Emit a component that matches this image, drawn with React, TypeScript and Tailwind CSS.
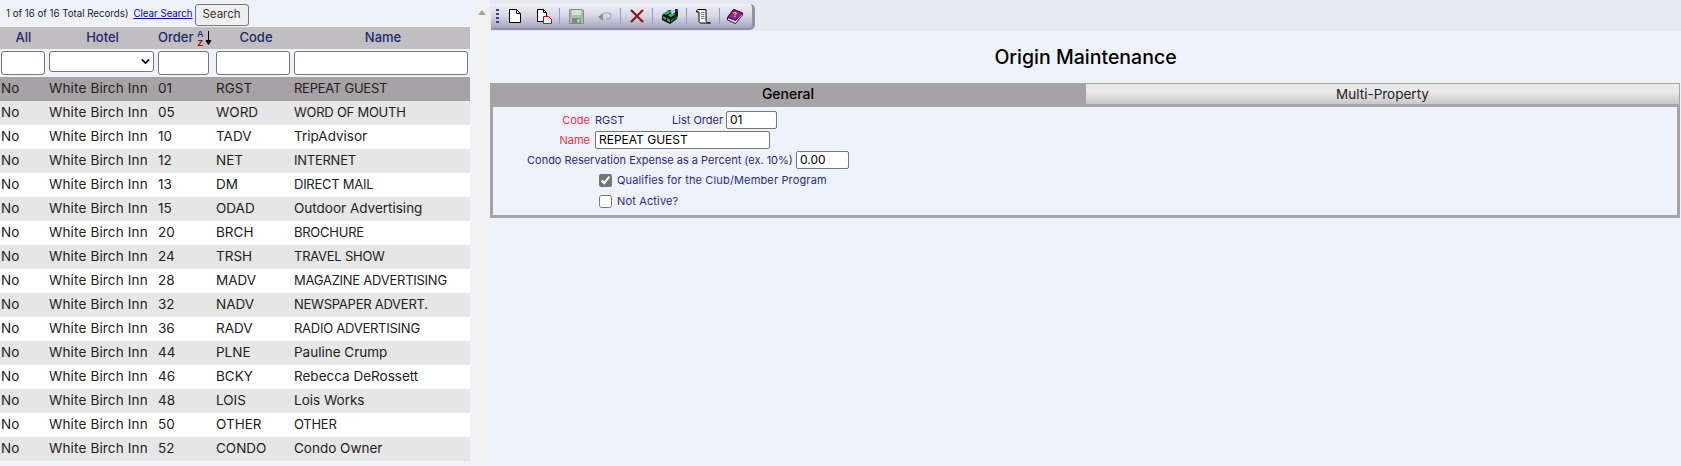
import { ChevronDown } from "lucide-react";

const rows = [
  ["01", "RGST", "REPEAT GUEST"],
  ["05", "WORD", "WORD OF MOUTH"],
  ["10", "TADV", "TripAdvisor"],
  ["12", "NET", "INTERNET"],
  ["13", "DM", "DIRECT MAIL"],
  ["15", "ODAD", "Outdoor Advertising"],
  ["20", "BRCH", "BROCHURE"],
  ["24", "TRSH", "TRAVEL SHOW"],
  ["28", "MADV", "MAGAZINE ADVERTISING"],
  ["32", "NADV", "NEWSPAPER ADVERT."],
  ["36", "RADV", "RADIO ADVERTISING"],
  ["44", "PLNE", "Pauline Crump"],
  ["46", "BCKY", "Rebecca DeRossett"],
  ["48", "LOIS", "Lois Works"],
  ["50", "OTHER", "OTHER"],
  ["52", "CONDO", "Condo Owner"],
];

function Sep() {
  return <div className="ml-[8px] h-[16px] w-px shrink-0 bg-[#7f9fd6]" />;
}

function Toolbar() {
  return (
    <div className="ml-px flex h-[26px] w-[264px] items-center rounded-r-[5px] border-r-[3px] border-b-2 border-[#9090ac] bg-gradient-to-b from-[#f0f0f8] via-[#d6d6e4] to-[#a4a4c0] pl-[5px]">
      {/* grip */}
      <svg width="3" height="15" className="shrink-0"><path d="M0 0h3v2H0zM0 4h3v2H0zM0 8h3v2H0zM0 12h3v2H0z" fill="#2f4a80" /></svg>
      {/* new */}
      <svg width="12" height="14" viewBox="0 0 12 14" className="ml-[10px] shrink-0" fill="#fff" stroke="#000"><path d="M.5.500h7l4 4v9H.5z" /><path d="M7.500.500v4h4" fill="none" /></svg>
      {/* copy */}
      <svg width="15" height="15" viewBox="0 0 15 15" className="ml-[16px] shrink-0" fill="#fff" stroke="#000"><path d="M.5.500h6l3 3v9H.5z" /><path d="M6.500.500v3h3" fill="none" /><path d="M6.500 7.500h5l3 3v4h-8z" stroke="#e00000" /></svg>
      <div className="ml-[-1px]"><Sep /></div>
      {/* save, greyed */}
      <svg width="15" height="15" viewBox="0 0 15 15" className="ml-[9px] shrink-0">
        <path d="M.5.500h13l1 1v13H.5z" fill="#a5c4ab" stroke="#7f9085" />
        <path d="M3 1h9v5H3z" fill="#d5e2d8" />
        <path d="M3 9h9v5.500H3z" fill="#7c8d80" />
        <path d="M8.500 10h2v3.500h-2z" fill="#c8d6cb" />
      </svg>
      {/* undo, greyed */}
      <svg width="14" height="11" viewBox="0 0 14 11" className="ml-[14px] shrink-0" fill="none">
        <path d="M0 6l5-4v8z" fill="#8d8d99" />
        <path d="M4 3.500c3-2.500 9-2.500 9 1.500 0 2.500-2.500 3.500-5 3" stroke="#a5a5b2" strokeWidth="1.200" />
      </svg>
      <Sep />
      {/* delete */}
      <svg width="14" height="14" viewBox="0 0 14 14" className="ml-[9px] shrink-0" fill="none" stroke="#8a1414" strokeWidth="2.200"><path d="M1 1l12 12M13 1L1 13" /></svg>
      <Sep />
      {/* cube */}
      <svg width="16" height="15" viewBox="0 0 16 15" className="ml-[9px] shrink-0">
        <path d="M0 6l7-5 4 1 5-2v6l-1 4-7 5-8-4z" fill="#05120c" />
        <path d="M1 7l3 1.500v2.500l-3-1.500zM5 9l3 1.500v3L5 12zM1 4.500l5-3 3 1.500-5 3z" fill="#12b866" />
        <path d="M9 10.500l2.500-1.500v2.500L9 13zM12.500 8.500l2-1.500v2.500l-2 1.500z" fill="#0d8a4c" />
        <path d="M6 6.500l4-2.500 3 1.500-4 2.500z" fill="#1ad070" />
        <path d="M8 2l5-1v3l-3 1z" fill="#c6cbd0" />
        <path d="M13 0h3v3h-3z" fill="#1a2aa8" />
      </svg>
      <Sep />
      {/* scroll */}
      <svg width="15" height="15" viewBox="0 0 15 15" className="ml-[9px] shrink-0" fill="#fff" stroke="#000">
        <path d="M2.500.500h7.500v11c0 1.500 1 2.500 4.500 2.500H5c-1.500 0-2-1-2-2.500V3H.5C.5 1.500 1 .500 2.500.500z" />
        <path d="M5 3.500h3.500M5 5.500h3.500M5 7.500h3.500M5 9.500h3.500" stroke="#7a7a7a" />
      </svg>
      <Sep />
      {/* help book */}
      <svg width="16" height="15" viewBox="0 0 16 15" className="ml-[7px] shrink-0">
        <path d="M0.500 9l6-8.500 9 3.500v2l-7 8.500-8-3.500z" fill="#efe6ef" stroke="#31083a" />
        <path d="M0.500 8.500l6-8 9 3.500-7 7.500z" fill="#93209a" stroke="#31083a" />
        <text x="5.500" y="8" fontSize="7.500" fontWeight="700" fill="#f2e32c" fontFamily="Liberation Sans, sans-serif">?</text>
      </svg>
    </div>
  );
}

function Cell({ name }: { name: string }) {
  const upper = name === name.toUpperCase();
  return <div className={`whitespace-nowrap ${upper ? "text-[13px] tracking-[-0.25px]" : ""}`}>{name}</div>;
}

export default function App() {
  return (
    <div className="flex h-[466px] w-[1681px] overflow-hidden bg-[#eef2fb] font-['Inter','Noto_Sans',sans-serif]">
      {/* left list */}
      <div className="w-[470px] shrink-0">
        <div className="flex h-[27px] items-center pl-[6px] pt-[2px]">
          <span className="text-[9.700px] text-[#222]">1 of 16 of 16 Total Records)</span>
          <a className="ml-[5px] text-[9.700px] text-[#0000ee] underline">Clear Search</a>
          <button className="ml-[2px] h-[22px] w-[54px] rounded-[3px] border border-[#767676] bg-[#efefef] text-[11.500px] text-[#333]">Search</button>
        </div>
        <div className="flex h-[22px] items-center bg-[#c1bec2] text-[13px] font-medium text-[#1d2a6b]">
          <div className="w-[47px] text-center">All</div>
          <div className="w-[111px] text-center">Hotel</div>
          <div className="flex w-[58px] items-center whitespace-nowrap">
            Order
            <svg width="16" height="16" viewBox="0 0 16 16" className="ml-[4px] shrink-0">
              <text x="0" y="7" fontSize="9" fontWeight="700" fill="#1c2fa0" fontFamily="Liberation Sans, sans-serif">A</text>
              <text x="0.500" y="15.500" fontSize="9" fontWeight="700" fill="#8b1010" fontFamily="Liberation Sans, sans-serif">Z</text>
              <path d="M11.500 1v11M9 10.500l2.500 4 2.500-4z" stroke="#000" fill="#000" />
            </svg>
          </div>
          <div className="ml-[3px] w-[74px] text-center">Code</div>
          <div className="ml-[3px] flex-1 text-center">Name</div>
        </div>
        <div className="flex h-[28px] items-center pl-px">
          <input className="h-[24px] w-[44px] rounded-[3px] border border-[#767676] bg-white" />
          <div className="relative ml-[4px] w-[105px] self-start pt-[2px]">
            <select className="block h-[21px] w-full appearance-none rounded-[3px] border border-[#767676] bg-white" />
            <ChevronDown size={13} strokeWidth={3} className="absolute right-[2px] top-[6px] text-black" />
          </div>
          <input className="ml-[4px] h-[24px] w-[51px] rounded-[3px] border border-[#767676] bg-white" />
          <input className="ml-[7px] h-[24px] w-[74px] rounded-[3px] border border-[#767676] bg-white" />
          <input className="ml-[4px] h-[24px] w-[174px] rounded-[3px] border border-[#767676] bg-white" />
        </div>
        <div className="text-[13.500px] text-[#222]">
          {rows.map((r, i) => (
            <div
              key={r[0]}
              className={`flex h-[24px] items-center pb-px ${i === 0 ? "bg-[#a7a2a5]" : i % 2 ? "bg-[#e6e6e6]" : "bg-white"}`}
            >
              <div className="w-[49px] pl-[1px]">No</div>
              <div className="w-[109px] whitespace-nowrap tracking-[0.15px]">White Birch Inn</div>
              <div className="w-[58px]">{r[0]}</div>
              <div className="w-[78px]">{r[1]}</div>
              <Cell name={r[2]} />
            </div>
          ))}
        </div>
      </div>

      {/* scrollbar */}
      <div className="ml-[3px] mt-[3px] flex h-[458px] w-[17px] shrink-0 justify-center bg-[#f1f1f1] pt-[7px]">
        <div className="h-0 w-0 border-x-[4px] border-b-[5px] border-x-transparent border-b-[#a3a3a3]" />
      </div>

      {/* right panel */}
      <div className="min-w-0 flex-1">
        <div className="h-[31px] bg-[#e8e8f0] pt-[4px]">
          <Toolbar />
        </div>
        <h1 className="mt-[13px] text-center text-[19.500px] font-medium leading-[26px] text-black">Origin Maintenance</h1>
        <div className="mt-[13px] pr-[1px]">
          <div className="flex h-[24px] bg-[#a7a2a5]">
            <div className="flex flex-1 items-center justify-center pb-[3px] text-[14px] font-medium text-black">General</div>
            <div className="mr-px mt-px flex h-[20px] w-[593px] items-center justify-center bg-gradient-to-b from-[#e9e9e9] from-40% to-[#c9c6c9] text-[13.500px] text-[#222]">Multi-Property</div>
          </div>
          <div className="h-[111px] border-x-[3px] border-b-[3px] border-[#a7a2a5] pt-[3px] text-[11px] text-[#2a2a8a]">
            <div className="flex h-[20px] items-center">
              <div className="w-[97px] text-right text-[#f0303c]">Code</div>
              <div className="ml-[5px] w-[77px]">RGST</div>
              <div className="w-[54px]">List Order</div>
              <input className="h-[18px] w-[51px] rounded-[2px] border border-[#767676] bg-white pl-[3px] text-[12px] text-black" defaultValue="01" />
            </div>
            <div className="flex h-[20px] items-center">
              <div className="w-[97px] text-right text-[#f0303c]">Name</div>
              <input className="ml-[5px] h-[18px] w-[175px] rounded-[2px] border border-[#767676] bg-white pl-[3px] text-[12px] text-black" defaultValue="REPEAT GUEST" />
            </div>
            <div className="flex h-[20px] items-center">
              <div className="ml-[34px] w-[264px] whitespace-nowrap">Condo Reservation Expense as a Percent (ex. 10%)</div>
              <input className="ml-[5px] h-[18px] w-[53px] rounded-[2px] border border-[#767676] bg-white pl-[3px] text-[12px] text-black" defaultValue="0.00" />
            </div>
            <label className="flex h-[21px] items-center pl-[106px]">
              <input type="checkbox" defaultChecked className="m-0 h-[13px] w-[13px] accent-[#767676]" />
              <span className="ml-[5px] tracking-[0.15px]">Qualifies for the Club/Member Program</span>
            </label>
            <label className="flex h-[21px] items-center pl-[106px]">
              <input type="checkbox" className="m-0 h-[13px] w-[13px]" />
              <span className="ml-[5px] tracking-[0.15px]">Not Active?</span>
            </label>
          </div>
        </div>
      </div>
    </div>
  );
}
